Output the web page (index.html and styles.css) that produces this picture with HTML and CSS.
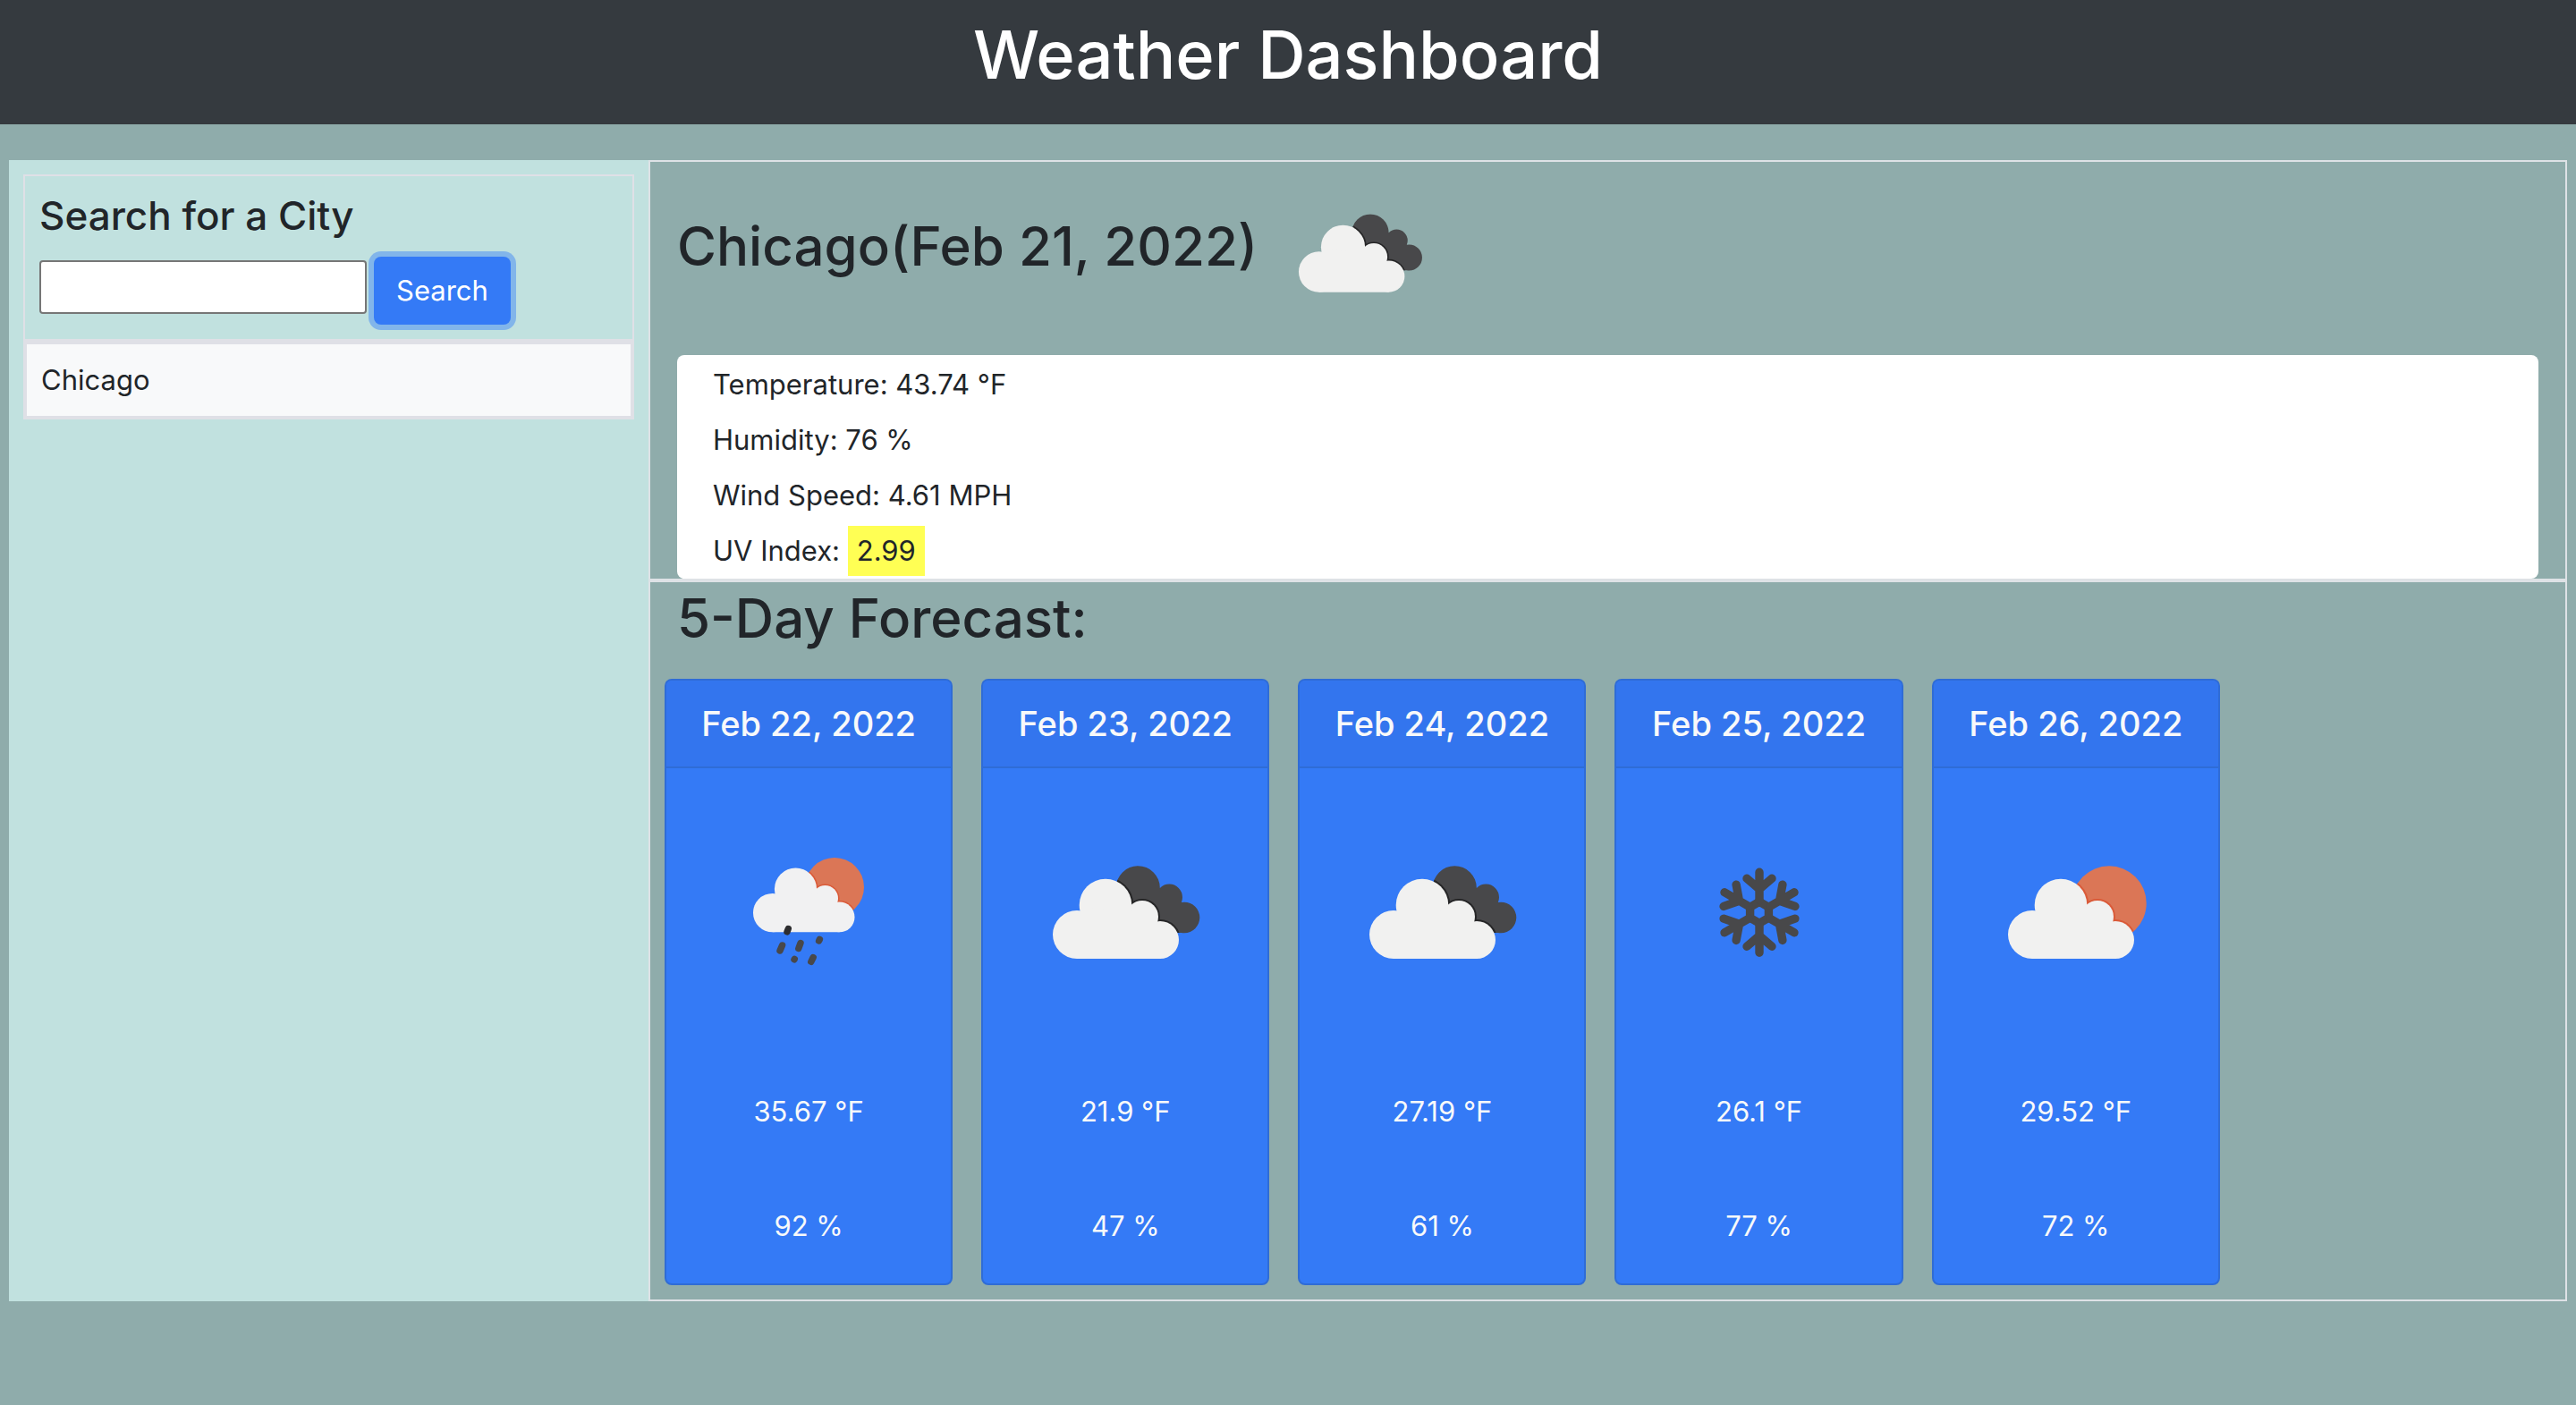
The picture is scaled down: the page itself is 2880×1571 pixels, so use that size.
FILE: index.html
```html
<!DOCTYPE html>
<html lang="en">
<head>
<meta charset="utf-8">
<title>Weather Dashboard</title>
<link rel="stylesheet" href="styles.css">
</head>
<body>
<svg class="sprite" aria-hidden="true">
  <defs>
    <g id="cloud">
      <circle cx="46" cy="125" r="27"/>
      <circle cx="78" cy="92" r="29.3"/>
      <circle cx="119" cy="105" r="18"/>
      <circle cx="139" cy="131" r="21"/>
      <path d="M46 110 L55 95 L119 100 L139 125 V152 H46 Z"/>
    </g>
    <clipPath id="dark-clip">
      <circle cx="114.3" cy="72.7" r="24.5"/>
      <circle cx="149.3" cy="83.3" r="14.7"/>
      <circle cx="166" cy="106" r="17.3"/>
      <path d="M114 80 L138 72 L150 85 L166 104 V123 H130 Z"/>
    </clipPath>
    <clipPath id="sun-clip"><circle cx="137" cy="90" r="41.7"/></clipPath>
    <clipPath id="rain-sun-clip"><circle cx="129" cy="72" r="33"/></clipPath>
    <symbol id="broken-clouds" viewBox="0 0 200 200">
      <g clip-path="url(#dark-clip)">
        <rect width="200" height="200" fill="#48484a"/>
        <use href="#cloud" stroke="#262627" stroke-width="4"/>
      </g>
      <use href="#cloud" fill="#f1f1f0"/>
    </symbol>
    <symbol id="few-clouds" viewBox="0 0 200 200">
      <g clip-path="url(#sun-clip)">
        <rect width="200" height="200" fill="#db7656"/>
        <use href="#cloud" x="5" stroke="#da5a38" stroke-width="4"/>
      </g>
      <use href="#cloud" x="5" fill="#f1f1f0"/>
    </symbol>
    <symbol id="rain" viewBox="0 0 200 200">
      <g clip-path="url(#rain-sun-clip)">
        <rect width="200" height="200" fill="#db7656"/>
        <use href="#cloud" transform="translate(22.7 0) scale(.805)" stroke="#da5a38" stroke-width="4"/>
      </g>
      <use href="#cloud" transform="translate(22.7 0) scale(.805)" fill="#f1f1f2"/>
      <g stroke="#48484a" stroke-width="7.4" stroke-linecap="round">
        <path d="M77.3 118.5 L76 121.8" stroke="#2d2d2f"/>
        <path d="M70.6 137 L68 143"/>
        <path d="M91 134.5 L88.8 140.5"/>
        <path d="M112.4 130.3 L111.6 132"/>
        <path d="M84.3 152.3 L84 152.8"/>
        <path d="M105.2 150.5 L102.8 155.3"/>
      </g>
    </symbol>
    <g id="snow-arm">
      <path d="M0 -14 V-45 M-14 -38 L0 -26 L14 -38"/>
    </g>
    <symbol id="snow" viewBox="0 0 200 200">
      <g transform="translate(100 100.3)" fill="none" stroke="#48484a" stroke-width="9.4" stroke-linecap="round" stroke-linejoin="round">
        <path d="M0 -12 L10.4 -6 V6 L0 12 L-10.4 6 V-6 Z"/>
        <use href="#snow-arm"/>
        <use href="#snow-arm" transform="rotate(60)"/>
        <use href="#snow-arm" transform="rotate(120)"/>
        <use href="#snow-arm" transform="rotate(180)"/>
        <use href="#snow-arm" transform="rotate(240)"/>
        <use href="#snow-arm" transform="rotate(300)"/>
      </g>
    </symbol>
  </defs>
</svg>

<header class="site-header">
  <h1>Weather Dashboard</h1>
</header>

<div class="dashboard">
  <aside class="sidebar">
    <form class="search" onsubmit="return false">
      <label class="search-title" for="city">Search for a City</label>
      <div class="search-row">
        <input class="search-input" id="city" type="text">
        <button class="search-button" type="submit">Search</button>
      </div>
    </form>
    <ul class="history">
      <li class="history-item">Chicago</li>
    </ul>
  </aside>

  <main class="content">
    <section class="current">
      <div class="current-head">
        <h2>Chicago(Feb 21, 2022)</h2>
        <svg class="current-icon" role="img" aria-label="Broken clouds"><use href="#broken-clouds"/></svg>
      </div>
      <div class="readings">
        <p>Temperature: 43.74 °F</p>
        <p>Humidity: 76 %</p>
        <p>Wind Speed: 4.61 MPH</p>
        <p>UV Index: <span class="uv">2.99</span></p>
      </div>
    </section>

    <section class="forecast">
      <h2>5-Day Forecast:</h2>
      <div class="days">
        <article class="day">
          <h3>Feb 22, 2022</h3>
          <svg class="day-icon" role="img" aria-label="Rain"><use href="#rain"/></svg>
          <p>35.67 °F</p>
          <p>92 %</p>
        </article>
        <article class="day">
          <h3>Feb 23, 2022</h3>
          <svg class="day-icon" role="img" aria-label="Broken clouds"><use href="#broken-clouds"/></svg>
          <p>21.9 °F</p>
          <p>47 %</p>
        </article>
        <article class="day">
          <h3>Feb 24, 2022</h3>
          <svg class="day-icon" role="img" aria-label="Broken clouds"><use href="#broken-clouds"/></svg>
          <p>27.19 °F</p>
          <p>61 %</p>
        </article>
        <article class="day">
          <h3>Feb 25, 2022</h3>
          <svg class="day-icon" role="img" aria-label="Snow"><use href="#snow"/></svg>
          <p>26.1 °F</p>
          <p>77 %</p>
        </article>
        <article class="day">
          <h3>Feb 26, 2022</h3>
          <svg class="day-icon" role="img" aria-label="Few clouds"><use href="#few-clouds"/></svg>
          <p>29.52 °F</p>
          <p>72 %</p>
        </article>
      </div>
    </section>
  </main>
</div>
</body>
</html>
```
FILE: styles.css
```css
*, *::before, *::after { box-sizing: border-box; }

body {
  margin: 0;
  background: #8facab;
  color: #212529;
  font-family: Inter, "Liberation Sans", sans-serif;
  font-size: 31px;
  line-height: 48px;
}

h1, h2, h3, p, ul { margin: 0; padding: 0; font-weight: 500; }
p { font-weight: 400; }
svg { display: block; }
.sprite { position: absolute; width: 0; height: 0; }

.site-header {
  padding: 13px 32px 30px;
  background: #353a3f;
  color: #fff;
  text-align: center;
}
.site-header h1 { font-size: 74px; line-height: 96px; }

.dashboard {
  display: grid;
  grid-template-columns: 1fr 3fr;
  margin: 40px 10px 0;
}

.sidebar {
  padding: 16px;
  background: #c1e1df;
}
.search {
  padding: 16px;
  border: 2px solid #dfe0e6;
}
.search-title {
  display: block;
  margin-bottom: 18px;
  font-size: 44px;
  font-weight: 500;
  line-height: 56px;
}
.search-row {
  display: flex;
  align-items: flex-start;
  gap: 8px;
}
.search-input {
  width: 366px;
  height: 60px;
  margin-top: 4px;
  padding: 2px 4px;
  border: 2px solid #767676;
  border-radius: 4px;
  background: #fff;
  font: inherit;
}
.search-button {
  height: 76px;
  padding: 12px 25px;
  border: 0;
  border-radius: 8px;
  background: #347af6;
  box-shadow: 0 0 0 6px #82b5ea;
  color: #fff;
  font: inherit;
}
.history {
  border: 2px solid #dfe0e6;
  list-style: none;
}
.history-item {
  padding: 16px;
  border: 2px solid #dfe0e6;
  background: #f8f9fa;
  font-weight: 400;
}

.content {
  display: flex;
  flex-direction: column;
}
.current, .forecast { border: 2px solid #dee2e6; }
.content h2 { font-size: 60px; line-height: 76px; }

.current { padding: 0 30px; }
.current-head {
  display: flex;
  align-items: center;
  gap: 30px;
  height: 216px;
  padding-bottom: 28px;
}
.current-icon { width: 168px; height: 168px; margin-top: 16px; }
.readings {
  padding: 2px 40px 0;
  border-radius: 8px;
  background: #fff;
  line-height: 62px;
}
.uv {
  display: inline-block;
  padding: 4px 10px;
  background: #ffff54;
  line-height: 48px;
}

.forecast { padding: 0 32px 16px 16px; }
.forecast h2 { padding: 2px 14px 0; }
.days {
  display: grid;
  grid-template-columns: repeat(6, 1fr);
  gap: 32px;
  margin-top: 30px;
}
.day {
  padding-bottom: 40px;
  border: 2px solid #2f6cd6;
  border-radius: 8px;
  background: #347af6;
  color: #f8f9fa;
  text-align: center;
}
.day h3 {
  padding: 24px 0;
  border-bottom: 2px solid #2f6cd6;
  border-radius: 6px 6px 0 0;
  background: #3375ee;
  font-size: 38px;
  line-height: 48px;
}
.day-icon { width: 200px; height: 200px; margin: 61px auto 99px; }
.day p + p { margin-top: 80px; }
```
